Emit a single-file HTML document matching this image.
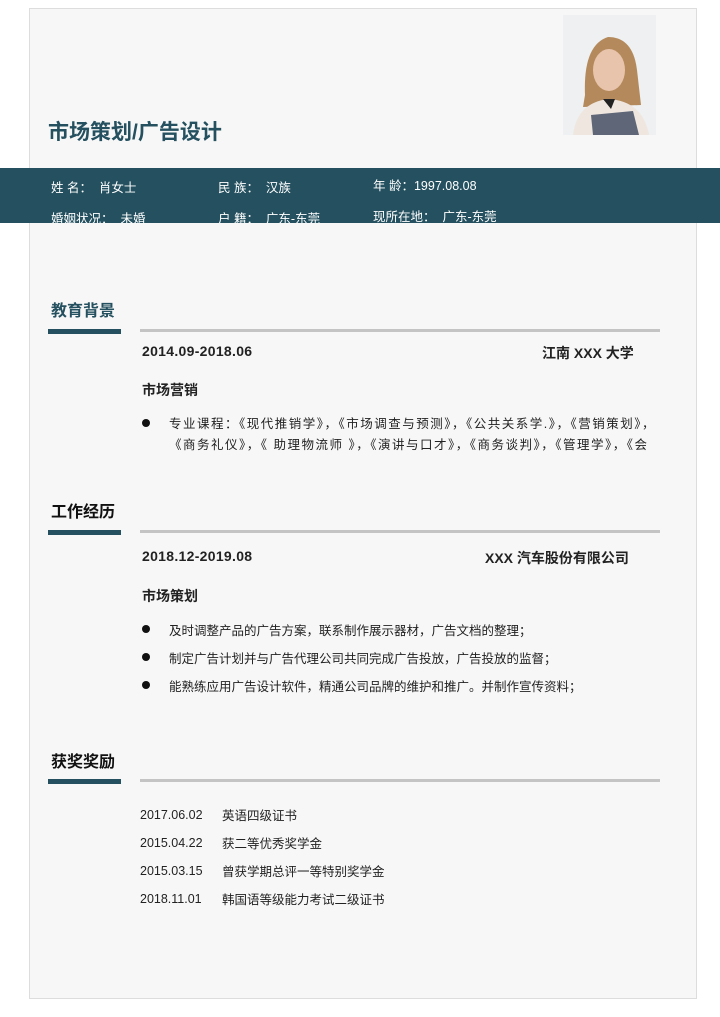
<!DOCTYPE html>
<html><head><meta charset="utf-8"><style>
*{margin:0;padding:0;box-sizing:border-box}
body{width:720px;height:1017px;background:#fff;position:relative;overflow:hidden;font-family:"Liberation Sans","Noto Sans CJK SC",sans-serif;color:#222}
.card{position:absolute;left:29px;top:8px;width:668px;height:991px;background:#f7f7f7;border:1px solid #ddd}
.a{position:absolute;white-space:nowrap}
.band{position:absolute;left:0;top:168px;width:720px;height:55px;background:#24505f;overflow:hidden;color:#fff;font-size:12.5px}
.h{position:absolute;font-size:16px;font-weight:bold;left:51px}
.bar{position:absolute;left:48px;width:73px;height:5px;background:#24505f}
.gl{position:absolute;left:140px;width:520px;height:3px;background:#c4c4c4}
.b{font-weight:bold;font-size:14px}
.t{font-size:12.5px}
.dot{position:absolute;left:142px;width:8px;height:8px;border-radius:50%;background:#111}
</style></head><body>
<div class="card"></div>
<div class="a" style="left:48px;top:116px;font-size:21px;font-weight:bold;color:#24505f">市场策划/广告设计</div>
<svg class="a" style="left:563px;top:15px" width="93" height="120" viewBox="0 0 93 120">
<rect width="93" height="120" fill="#eef0f1"/>
<path d="M22 80 Q20 30 45 22 Q70 22 74 55 L78 90 L20 92Z" fill="#b48a5c"/>
<ellipse cx="46" cy="55" rx="16" ry="21" fill="#e9c4ac"/>
<path d="M10 120 Q14 88 45 84 Q80 86 86 120Z" fill="#efe6e0"/>
<path d="M28 100 L70 96 L76 120 L30 120Z" fill="#5e6677"/>
<path d="M40 84 L52 84 L48 94Z" fill="#222"/>
</svg>
<div class="band">
<div class="a" style="left:51px;top:9px">姓 名：&nbsp; 肖女士</div>
<div class="a" style="left:218px;top:9px">民 族：&nbsp; 汉族</div>
<div class="a" style="left:373px;top:7px">年 龄：1997.08.08</div>
<div class="a" style="left:51px;top:40px">婚姻状况：&nbsp; 未婚</div>
<div class="a" style="left:218px;top:40px">户 籍：&nbsp; 广东-东莞</div>
<div class="a" style="left:373px;top:38px">现所在地：&nbsp; 广东-东莞</div>
</div>

<div class="h" style="top:297px;color:#24505f">教育背景</div>
<div class="bar" style="top:329px"></div>
<div class="gl" style="top:329px"></div>
<div class="a b" style="left:142px;top:343px;letter-spacing:0.3px">2014.09-2018.06</div>
<div class="a b" style="left:542px;top:343px">江南 XXX 大学</div>
<div class="a b" style="left:142px;top:380px">市场营销</div>
<div class="dot" style="top:419px"></div>
<div class="a t" style="left:169px;top:413px;letter-spacing:1.5px">专业课程：《现代推销学》，《市场调查与预测》，《公共关系学.》，《营销策划》，</div>
<div class="a t" style="left:169px;top:434px;letter-spacing:1.5px">《商务礼仪》，《 助理物流师 》，《演讲与口才》，《商务谈判》，《管理学》，《会</div>

<div class="h" style="top:498px;color:#111">工作经历</div>
<div class="bar" style="top:530px"></div>
<div class="gl" style="top:530px"></div>
<div class="a b" style="left:142px;top:548px;letter-spacing:0.3px">2018.12-2019.08</div>
<div class="a b" style="left:485px;top:548px">XXX 汽车股份有限公司</div>
<div class="a b" style="left:142px;top:586px">市场策划</div>
<div class="dot" style="top:625px"></div>
<div class="a t" style="left:169px;top:620px">及时调整产品的广告方案，联系制作展示器材，广告文档的整理；</div>
<div class="dot" style="top:653px"></div>
<div class="a t" style="left:169px;top:648px">制定广告计划并与广告代理公司共同完成广告投放，广告投放的监督；</div>
<div class="dot" style="top:681px"></div>
<div class="a t" style="left:169px;top:676px">能熟练应用广告设计软件，精通公司品牌的维护和推广。并制作宣传资料；</div>

<div class="h" style="top:748px;color:#111">获奖奖励</div>
<div class="bar" style="top:779px"></div>
<div class="gl" style="top:779px"></div>
<div class="a t" style="left:140px;top:808px">2017.06.02</div><div class="a t" style="left:222px;top:805px">英语四级证书</div>
<div class="a t" style="left:140px;top:836px">2015.04.22</div><div class="a t" style="left:222px;top:833px">获二等优秀奖学金</div>
<div class="a t" style="left:140px;top:864px">2015.03.15</div><div class="a t" style="left:222px;top:861px">曾获学期总评一等特别奖学金</div>
<div class="a t" style="left:140px;top:892px">2018.11.01</div><div class="a t" style="left:222px;top:889px">韩国语等级能力考试二级证书</div>
</body></html>
